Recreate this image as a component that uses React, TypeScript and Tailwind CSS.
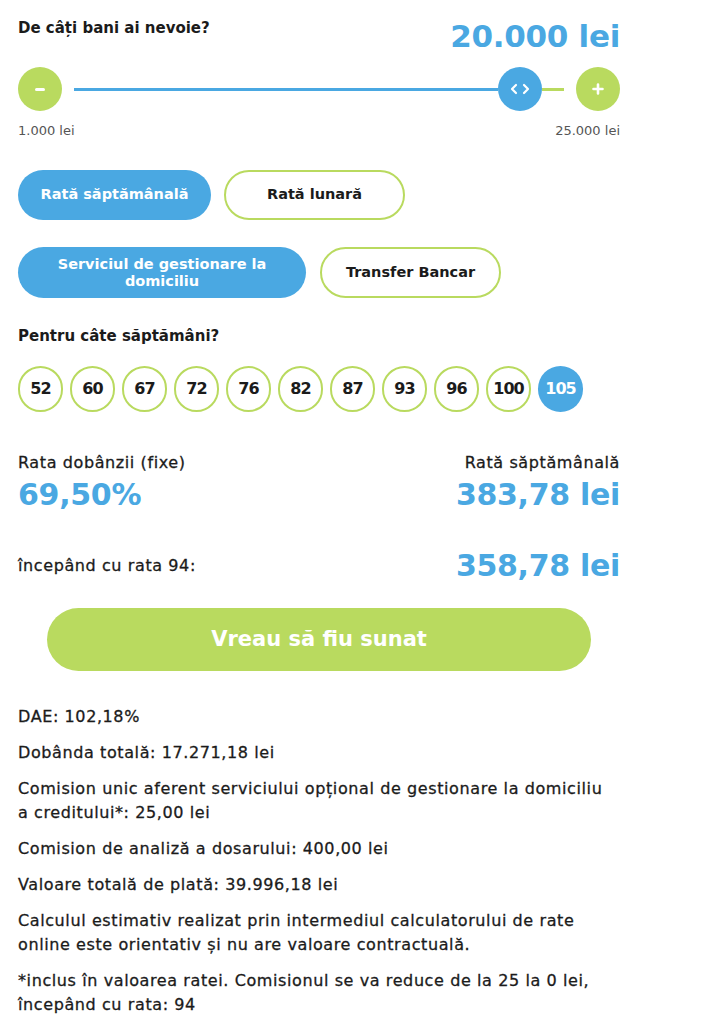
import React from "react";

const weeks = [52, 60, 67, 72, 76, 82, 87, 93, 96, 100, 105];

// medium-weight body text: DejaVu Book, slightly opened up and thickened
const body = "text-[16px] tracking-[0.6px] [-webkit-text-stroke:0.3px_currentColor]";

export default function App() {
  return (
    <div
      className="w-[715px] min-h-[1024px] bg-white text-[#1b1b1b]"
      style={{ fontFamily: "'DejaVu Sans', Inter, sans-serif" }}
    >
      <div className="w-[602px] ml-[18px] pt-[16px]">
        {/* amount header */}
        <div className="flex justify-between items-start">
          <div className="text-[15px] font-bold mt-[2px] leading-[20px]">De câți bani ai nevoie?</div>
          <div className="text-[31px] font-bold text-[#4aa8e2] leading-[40px] tracking-[-0.3px]">20.000 lei</div>
        </div>

        {/* slider */}
        <div className="flex items-center mt-[11px] h-[44px]">
          <div className="w-[44px] h-[44px] rounded-full bg-[#b9da5f] flex items-center justify-center shrink-0">
            <div className="w-[10px] h-[3px] rounded bg-white" />
          </div>
          <div className="flex-1 flex items-center ml-[12px]">
            <div className="flex-1 h-[3px] bg-[#4aa8e2]" />
            <div className="w-[44px] h-[44px] rounded-full bg-[#4aa8e2] flex items-center justify-center shrink-0">
              <svg width="20" height="12" viewBox="0 0 20 12" fill="none" stroke="white" strokeWidth="2.2" strokeLinecap="round" strokeLinejoin="round">
                <path d="M6 2 L2 6 L6 10" />
                <path d="M14 2 L18 6 L14 10" />
              </svg>
            </div>
            <div className="w-[22px] h-[3px] bg-[#b9da5f]" />
          </div>
          <div className="w-[44px] h-[44px] rounded-full bg-[#b9da5f] flex items-center justify-center shrink-0 ml-[12px]">
            <svg width="12" height="12" viewBox="0 0 12 12" stroke="white" strokeWidth="2.6" strokeLinecap="round">
              <path d="M6 1.5 V10.5 M1.5 6 H10.5" />
            </svg>
          </div>
        </div>
        <div className="flex justify-between text-[13px] text-[#555] mt-[12px] leading-[16px]">
          <span>1.000 lei</span>
          <span>25.000 lei</span>
        </div>

        {/* rate type */}
        <div className="flex gap-[13px] mt-[31px]">
          <button className="w-[193px] h-[50px] rounded-full bg-[#4aa8e2] text-white text-[14.5px] font-bold">Rată săptămânală</button>
          <button className="w-[181px] h-[50px] rounded-full border-2 border-[#b9da5f] text-[14.5px] font-bold">Rată lunară</button>
        </div>
        <div className="flex gap-[14px] mt-[27px]">
          <button className="w-[288px] h-[51px] rounded-full bg-[#4aa8e2] text-white text-[14.5px] font-bold leading-[17px] px-[30px]">
            Serviciul de gestionare la domiciliu
          </button>
          <button className="w-[181px] h-[51px] rounded-full border-2 border-[#b9da5f] text-[14.5px] font-bold">Transfer Bancar</button>
        </div>

        {/* weeks */}
        <div className="text-[15px] font-bold mt-[28px] leading-[20px]">Pentru câte săptămâni?</div>
        <div className="flex gap-[7px] mt-[20px]">
          {weeks.map((w) =>
            w === 105 ? (
              <div key={w} className="w-[45px] h-[46px] rounded-full bg-[#4aa8e2] text-white text-[16px] font-bold flex items-center justify-center tracking-[-1px]">
                {w}
              </div>
            ) : (
              <div key={w} className="w-[45px] h-[46px] rounded-full border-2 border-[#b9da5f] text-[16px] font-bold flex items-center justify-center tracking-[-1px]">
                {w}
              </div>
            )
          )}
        </div>

        {/* results */}
        <div className="flex justify-between mt-[41px]">
          <div>
            <div className={`${body} leading-[20px]`}>Rata dobânzii (fixe)</div>
            <div className="text-[30px] font-bold text-[#4aa8e2] leading-[44px] tracking-[-0.3px]">69,50%</div>
          </div>
          <div className="text-right">
            <div className={`${body} leading-[20px]`}>Rată săptămânală</div>
            <div className="text-[30px] font-bold text-[#4aa8e2] leading-[44px] tracking-[-0.3px]">383,78 lei</div>
          </div>
        </div>
        <div className="flex justify-between items-center mt-[29px]">
          <div className={body}>începând cu rata 94:</div>
          <div className="text-[30px] font-bold text-[#4aa8e2] leading-[40px] tracking-[-0.3px]">358,78 lei</div>
        </div>

        {/* call to action */}
        <div className="mt-[22px] pl-[29px]">
          <button className="w-[544px] h-[63px] rounded-full bg-[#b9da5f] text-white text-[21px] font-bold">
            Vreau să fiu sunat
          </button>
        </div>

        {/* details */}
        <div className={`mt-[34px] ${body} leading-[24px] flex flex-col gap-[12px]`}>
          <p>DAE: 102,18%</p>
          <p>Dobânda totală: 17.271,18 lei</p>
          <p>
            Comision unic aferent serviciului opțional de gestionare la domiciliu
            <br />a creditului*: 25,00 lei
          </p>
          <p>Comision de analiză a dosarului: 400,00 lei</p>
          <p>Valoare totală de plată: 39.996,18 lei</p>
          <p>
            Calculul estimativ realizat prin intermediul calculatorului de rate
            <br />online este orientativ și nu are valoare contractuală.
          </p>
          <p>
            *inclus în valoarea ratei. Comisionul se va reduce de la 25 la 0 lei,
            <br />începând cu rata: 94
          </p>
        </div>
      </div>
    </div>
  );
}
